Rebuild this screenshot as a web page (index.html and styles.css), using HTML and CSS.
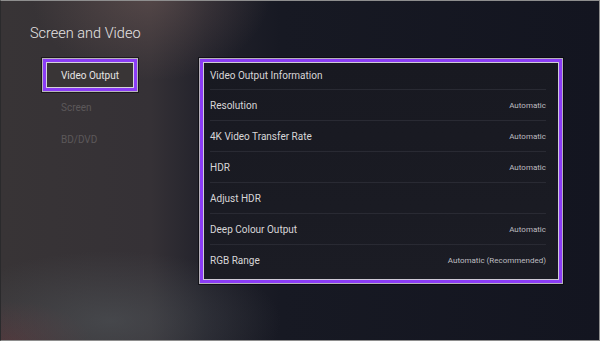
FILE: index.html
```html
<!DOCTYPE html>
<html lang="en">
<head>
<meta charset="utf-8">
<title>Screen and Video</title>
<link rel="stylesheet" href="styles.css">
</head>
<body>
<div class="screen">
  <h1 class="title">Screen and Video</h1>
  <div class="main">
    <nav class="menu">
      <div class="menu-item is-focused">Video Output</div>
      <div class="menu-item">Screen</div>
      <div class="menu-item">BD/DVD</div>
    </nav>
    <section class="panel">
      <ul class="rows">
        <li class="row row-first"><span class="label">Video Output Information</span></li>
        <li class="row"><span class="label">Resolution</span><span class="value">Automatic</span></li>
        <li class="row"><span class="label">4K Video Transfer Rate</span><span class="value">Automatic</span></li>
        <li class="row"><span class="label">HDR</span><span class="value">Automatic</span></li>
        <li class="row"><span class="label">Adjust HDR</span></li>
        <li class="row"><span class="label">Deep Colour Output</span><span class="value">Automatic</span></li>
        <li class="row row-last"><span class="label">RGB Range</span><span class="value">Automatic (Recommended)</span></li>
      </ul>
    </section>
  </div>
</div>
</body>
</html>
```
FILE: styles.css
```css
* { box-sizing: border-box; }

html, body {
  margin: 0;
  padding: 0;
  background: #111;
}

.screen {
  width: 600px;
  height: 341px;
  border-top: 1px solid #8e8e8e;
  border-right: 1px solid #8e8e8e;
  border-bottom: 1px solid #8e8e8e;
  border-left: 1px solid #2a2a2c;
  font-family: Roboto, "Liberation Sans", sans-serif;
  overflow: hidden;
  background:
    radial-gradient(ellipse 120px 90px at 150px -10px, rgba(125, 100, 95, 0.45), rgba(125, 100, 95, 0) 100%),
    radial-gradient(ellipse 170px 70px at 110px 320px, rgba(85, 92, 96, 0.5), rgba(85, 92, 96, 0) 100%),
    radial-gradient(ellipse 80px 40px at 10px 340px, rgba(110, 50, 56, 0.4), rgba(110, 50, 56, 0) 100%),
    linear-gradient(to right, #383436 0px, #353136 150px, #22222b 205px, #171923 280px, #131520 600px);
}

.title {
  margin: 0;
  padding: 24px 0 0 29px;
  font-size: 14.5px;
  line-height: 17px;
  font-weight: 300;
  color: #e6e4e4;
}

.main {
  display: flex;
  align-items: flex-start;
  margin-top: 17px;
}

.menu {
  display: flex;
  flex-direction: column;
  margin-left: 42px;
  width: 94px;
}

.menu-item {
  height: 32px;
  display: flex;
  align-items: center;
  padding-left: 18px;
  font-size: 10px;
  color: #5c585a;
}

.menu-item.is-focused {
  color: #e6e4e4;
  border: 3px solid #8b3cf6;
  padding-left: 15px;
  background: #393536;
  box-shadow:
    inset 0 0 0 1px #d6d2dc,
    0 0 0 1px #b8b4bc,
    0 0 0 2px rgba(10, 10, 12, 0.6);
}

.panel {
  margin-left: 63px;
  width: 362px;
  height: 224px;
  border: 3px solid #8b3cf6;
  background: linear-gradient(to bottom, #181921, #1b1c24);
  box-shadow:
    inset 0 0 0 1px #cfcbd6,
    0 0 0 1px #b5b1ba,
    0 0 0 2px rgba(5, 5, 8, 0.6);
}

.rows {
  list-style: none;
  margin: 0;
  padding: 0 13px 0 7px;
}

.row {
  height: 31px;
  display: flex;
  align-items: center;
  justify-content: space-between;
  border-bottom: 1px solid #292a33;
}

.row-first { height: 28px; }
.row-last { border-bottom: none; }

.label {
  font-size: 10px;
  color: #d8d6d8;
}

.value {
  font-size: 8px;
  color: #bdbcc0;
}
```
